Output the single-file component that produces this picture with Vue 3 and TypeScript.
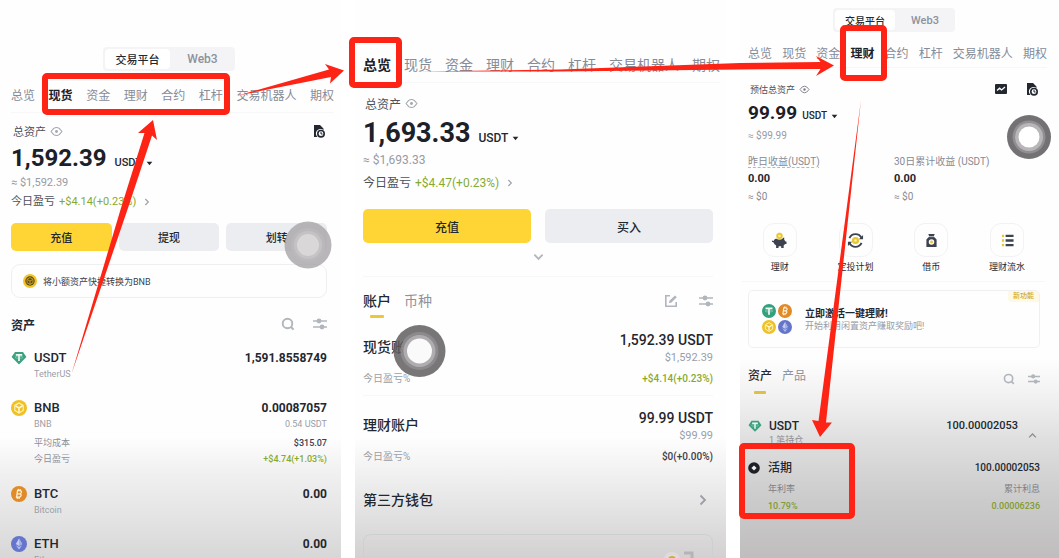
<script setup lang="ts">
interface Asset {
  icon: string
  symbol: string
  name: string
  amount: string
  value?: string
  cost?: string
  pnl?: string
}

interface Account {
  name: string
  amount: string
  value: string
  pnl: string
  gain: boolean
}

const tabs: string[] = ['总览', '现货', '资金', '理财', '合约', '杠杆', '交易机器人', '期权']

const assets: Asset[] = [
  { icon: 'tether', symbol: 'USDT', name: 'TetherUS', amount: '1,591.8558749' },
  { icon: 'bnb', symbol: 'BNB', name: 'BNB', amount: '0.00087057', value: '0.54 USDT', cost: '$315.07', pnl: '+$4.74(+1.03%)' },
  { icon: 'btc', symbol: 'BTC', name: 'Bitcoin', amount: '0.00' },
  { icon: 'eth', symbol: 'ETH', name: 'Ethereum', amount: '0.00' },
]

const accounts: Account[] = [
  { name: '现货账户', amount: '1,592.39 USDT', value: '$1,592.39', pnl: '+$4.14(+0.23%)', gain: true },
  { name: '理财账户', amount: '99.99 USDT', value: '$99.99', pnl: '$0(+0.00%)', gain: false },
]

const shortcuts = [
  { icon: 'piggy', label: '理财' },
  { icon: 'cycle', label: '定投计划' },
  { icon: 'bag', label: '借币' },
  { icon: 'list', label: '理财流水' },
]
</script>

<template>
  <svg class="symbols" aria-hidden="true">
    <symbol id="eye" viewBox="0 0 14 12">
      <path d="M1 6 L4 2.6 Q7 .6 10 2.6 L13 6 L10 9.4 Q7 11.4 4 9.4 Z" fill="none" stroke="currentColor" stroke-width="1.2" stroke-linejoin="round" />
      <circle cx="7" cy="6" r="1.6" fill="currentColor" />
    </symbol>
    <symbol id="doc" viewBox="0 0 12 14">
      <path d="M1 1 H7 L10.5 4.5 V6 A4.5 4.5 0 0 0 4.5 13 H1 Z" fill="currentColor" />
      <circle cx="8" cy="9.7" r="3.2" fill="none" stroke="currentColor" stroke-width="1.6" />
      <path d="M8 8 V10 H9.6" fill="none" stroke="currentColor" stroke-width="1" />
    </symbol>
    <symbol id="chart" viewBox="0 0 12 12">
      <rect x="0" y="1" width="12" height="10" rx="1" fill="currentColor" />
      <path d="M2 7.6 L4.6 5.2 L6.6 7 L10 4" fill="none" stroke="#fff" stroke-width="1.3" />
    </symbol>
    <symbol id="search" viewBox="0 0 14 14">
      <circle cx="6.5" cy="6.5" r="4.8" fill="none" stroke="currentColor" stroke-width="1.9" />
      <path d="M10 10 L12.6 12.6" stroke="currentColor" stroke-width="2" />
    </symbol>
    <symbol id="sliders" viewBox="0 0 14 12">
      <path d="M0 3 H14 M0 9 H14" stroke="currentColor" stroke-width="1.7" />
      <circle cx="6" cy="3" r="2.4" fill="currentColor" />
      <circle cx="9" cy="9" r="2.4" fill="currentColor" />
    </symbol>
    <symbol id="edit" viewBox="0 0 14 14">
      <path d="M6 1.8 H1.8 V12.2 H12.2 V8" fill="none" stroke="currentColor" stroke-width="1.6" />
      <path d="M5 9 L5.4 6.8 L11 1.4 L12.8 3.2 L7.2 8.7 Z" fill="currentColor" />
    </symbol>
    <symbol id="caret" viewBox="0 0 8 6">
      <path d="M.6 1 H7.4 L4 5 Z" fill="currentColor" />
    </symbol>
    <symbol id="right" viewBox="0 0 8 12">
      <path d="M1.5 1.5 L6 6 L1.5 10.5" fill="none" stroke="currentColor" stroke-width="1.8" />
    </symbol>
    <symbol id="down" viewBox="0 0 12 8">
      <path d="M1.5 1.5 L6 6 L10.5 1.5" fill="none" stroke="currentColor" stroke-width="2" />
    </symbol>
    <symbol id="up" viewBox="0 0 12 8">
      <path d="M1.5 6.5 L6 2 L10.5 6.5" fill="none" stroke="currentColor" stroke-width="1.8" />
    </symbol>
    <symbol id="tether" viewBox="0 0 16 16">
      <path d="M4 2 H12 L15.4 7 L8 14.6 L.6 7 Z" fill="#3ba17e" />
      <path d="M4.8 4.8 H11.2 M8 4.8 V11" stroke="#eefaf5" stroke-width="1.7" />
      <ellipse cx="8" cy="7.3" rx="4" ry="1" fill="none" stroke="#c9eadf" stroke-width=".4" />
    </symbol>
    <symbol id="tether-round" viewBox="0 0 16 16">
      <circle cx="8" cy="8" r="8" fill="#35a07c" />
      <path d="M4 5 H12 M8 5 V12.4" stroke="#eefaf5" stroke-width="2" />
      <ellipse cx="8" cy="8" rx="4.4" ry="1.1" fill="none" stroke="#c9eadf" stroke-width=".5" />
    </symbol>
    <symbol id="bnb" viewBox="0 0 16 16">
      <circle cx="8" cy="8" r="8" fill="#efc125" />
      <path d="M8 3 L12.2 5.4 V10.4 L8 13 L3.8 10.4 V5.4 Z" fill="none" stroke="#fff3bd" stroke-width="1.1" />
      <path d="M4.6 6 L8 8 L11.4 6 M8 8 V12" fill="none" stroke="#fff8db" stroke-width="1.5" />
    </symbol>
    <symbol id="bnb-dark" viewBox="0 0 16 16">
      <circle cx="8" cy="8" r="8" fill="#f1c42b" />
      <circle cx="8" cy="8" r="5.4" fill="#5b4a17" />
      <path d="M8 4 L11.4 6 V10 L8 12 L4.6 10 V6 Z M5 6.4 L8 8 L11 6.4 M8 8 V11.6" fill="none" stroke="#d9ad25" stroke-width="1" />
    </symbol>
    <symbol id="btc" viewBox="0 0 16 16">
      <circle cx="8" cy="8" r="8" fill="#e08b27" />
      <path d="M6.6 4.2 L5.6 11.4 M6.4 4.6 H9 Q10.8 4.8 10.4 6.4 Q10 7.8 8.2 7.8 H6.2 M8.2 7.8 Q10.6 8 10 9.8 Q9.4 11.3 7.6 11.2 H4.8 M7.4 2.8 L7.2 4.4 M9.2 3 L9 4.6 M6.4 11.2 L6.2 12.8 M8.2 11.2 L8 12.8" fill="none" stroke="#fff1da" stroke-width="1.3" />
    </symbol>
    <symbol id="eth" viewBox="0 0 16 16">
      <circle cx="8" cy="8" r="8" fill="#6475cb" />
      <path d="M8 2.4 L11.2 8.1 L8 10 L4.8 8.1 Z" fill="#c5cdf3" />
      <path d="M8 2.4 L11.2 8.1 L8 10 Z" fill="#a2afe5" />
      <path d="M4.8 9.2 L8 13.6 L11.2 9.2 L8 11.1 Z" fill="#b4bfee" />
    </symbol>
    <symbol id="flexible" viewBox="0 0 12 12">
      <circle cx="6" cy="6" r="5.8" fill="#1e2026" />
      <path d="M6 3.4 L8.6 6 L6 8.6 L3.4 6 Z" fill="#f2f1f1" />
    </symbol>
    <symbol id="piggy" viewBox="0 0 18 18">
      <path d="M2.6 9.4 Q3.6 7 7 7 H11 L14 5.8 V8.2 L15.4 10 H16.4 V12.6 H15 L13.4 14.2 V17 H10.8 V15.2 H8 V17 H5.4 V14.4 Q3 13 2.8 11.2 L1 10.4 V9 Z" fill="#3c4250" />
      <circle cx="9" cy="4.2" r="3.8" fill="#e8c62f" stroke="#fff" stroke-width=".6" />
      <circle cx="9" cy="4.2" r="1.3" fill="#fff2ab" />
    </symbol>
    <symbol id="cycle" viewBox="0 0 18 18">
      <path d="M2.6 6.4 A7 7 0 0 1 15.4 6.4 M15.4 11.6 A7 7 0 0 1 2.6 11.6" fill="none" stroke="#3c4250" stroke-width="2" />
      <path d="M12.6 7.6 H17 V3.2 Z M5.4 10.4 H1 V14.8 Z" fill="#3c4250" />
      <circle cx="9" cy="9" r="3.8" fill="#e8c62f" />
      <circle cx="9" cy="9" r="1.3" fill="#fff2ab" />
    </symbol>
    <symbol id="bag" viewBox="0 0 18 18">
      <path d="M5.6 2 H12.4 L11.4 4.8 L14.4 8 V16 H3.6 V8 L6.6 4.8 Z" fill="#3c4250" />
      <path d="M6 4.9 H12" stroke="#fff" stroke-width=".7" />
      <circle cx="9" cy="10.6" r="2.9" fill="#fff" />
      <circle cx="9" cy="10.6" r="1.5" fill="#e8c62f" />
    </symbol>
    <symbol id="list" viewBox="0 0 18 18">
      <path d="M7 4 H15.4 M7 9 H15.4 M7 14 H15.4" stroke="#3c4250" stroke-width="2.4" />
      <path d="M3 4 H5.4 M3 9 H5.4 M3 14 H5.4" stroke="#e8c62f" stroke-width="2.4" />
    </symbol>
  </svg>

  <main class="board">
    <section class="panel spot" aria-label="现货">
      <div class="segmented">
        <button type="button" class="on">交易平台</button>
        <button type="button">Web3</button>
      </div>
      <nav class="tabs">
        <button v-for="t in tabs" :key="t" type="button" :class="{ on: t === '现货' }">{{ t }}</button>
      </nav>
      <div class="label-row">
        <span>总资产</span>
        <svg class="eye"><use href="#eye" /></svg>
        <button type="button" class="icon-btn push dark" aria-label="历史记录"><svg class="doc"><use href="#doc" /></svg></button>
      </div>
      <div class="total">
        <strong>1,592.39</strong>
        <button type="button" class="unit">USDT <svg class="caret"><use href="#caret" /></svg></button>
      </div>
      <p class="approx">≈ $1,592.39</p>
      <p class="pnl">今日盈亏 <span class="gain">+$4.14(+0.23%)</span><svg class="more"><use href="#right" /></svg></p>
      <div class="actions">
        <button type="button" class="primary">充值</button>
        <button type="button">提现</button>
        <button type="button">划转</button>
      </div>
      <button type="button" class="convert">
        <svg class="coin-small"><use href="#bnb-dark" /></svg>将小额资产快捷转换为BNB
      </button>
      <div class="heading">
        <h2>资产</h2>
        <button type="button" class="icon-btn push" aria-label="搜索"><svg class="ic"><use href="#search" /></svg></button>
        <button type="button" class="icon-btn" aria-label="筛选"><svg class="ic"><use href="#sliders" /></svg></button>
      </div>
      <ul class="assets">
        <li v-for="a in assets" :key="a.symbol">
          <svg class="coin"><use :href="'#' + a.icon" /></svg>
          <div class="lines">
            <div class="line main"><span>{{ a.symbol }}</span><b>{{ a.amount }}</b></div>
            <div class="line sub"><span>{{ a.name }}</span><span>{{ a.value }}</span></div>
            <template v-if="a.cost">
              <div class="line stat first"><span>平均成本</span><b>{{ a.cost }}</b></div>
              <div class="line stat"><span>今日盈亏</span><span class="gain">{{ a.pnl }}</span></div>
            </template>
          </div>
        </li>
      </ul>
    </section>

    <section class="panel overview" aria-label="总览">
      <nav class="tabs">
        <button v-for="t in tabs" :key="t" type="button" :class="{ on: t === '总览' }">{{ t }}</button>
      </nav>
      <div class="label-row">
        <span>总资产</span>
        <svg class="eye"><use href="#eye" /></svg>
      </div>
      <div class="total">
        <strong>1,693.33</strong>
        <button type="button" class="unit">USDT <svg class="caret"><use href="#caret" /></svg></button>
      </div>
      <p class="approx">≈ $1,693.33</p>
      <p class="pnl">今日盈亏 <span class="gain">+$4.47(+0.23%)</span><svg class="more"><use href="#right" /></svg></p>
      <div class="actions">
        <button type="button" class="primary">充值</button>
        <button type="button">买入</button>
      </div>
      <button type="button" class="expand" aria-label="展开"><svg class="arrow"><use href="#down" /></svg></button>
      <div class="heading">
        <button type="button" class="view on">账户</button>
        <button type="button" class="view">币种</button>
        <button type="button" class="icon-btn push" aria-label="编辑"><svg class="ic"><use href="#edit" /></svg></button>
        <button type="button" class="icon-btn" aria-label="筛选"><svg class="ic"><use href="#sliders" /></svg></button>
      </div>
      <article v-for="a in accounts" :key="a.name" class="account">
        <div class="line top">
          <h3>{{ a.name }}</h3>
          <div class="sums"><b>{{ a.amount }}</b><span>{{ a.value }}</span></div>
        </div>
        <div class="line foot"><span>今日盈亏%</span><span :class="a.gain ? 'gain' : 'flat'">{{ a.pnl }}</span></div>
      </article>
      <button type="button" class="wallet">第三方钱包<svg class="go"><use href="#right" /></svg></button>
      <div class="wallet-card">
        <svg class="wallet-art" viewBox="0 0 46 30" aria-hidden="true">
          <circle cx="17" cy="13" r="8" fill="#dddcdd" />
          <circle cx="17" cy="13" r="4" fill="#d3ab2b" />
          <path d="M29 6 H37 V26" fill="none" stroke="#b5b3b5" stroke-width="3" />
        </svg>
      </div>
    </section>

    <section class="panel earn" aria-label="理财">
      <div class="segmented">
        <button type="button" class="on">交易平台</button>
        <button type="button">Web3</button>
      </div>
      <nav class="tabs">
        <button v-for="t in tabs" :key="t" type="button" :class="{ on: t === '理财' }">{{ t }}</button>
      </nav>
      <div class="label-row">
        <span>预估总资产</span>
        <svg class="eye"><use href="#eye" /></svg>
        <button type="button" class="icon-btn push dark" aria-label="收益分析"><svg class="doc"><use href="#chart" /></svg></button>
        <button type="button" class="icon-btn dark" aria-label="历史记录"><svg class="doc"><use href="#doc" /></svg></button>
      </div>
      <div class="total">
        <strong>99.99</strong>
        <button type="button" class="unit">USDT <svg class="caret"><use href="#caret" /></svg></button>
      </div>
      <p class="approx">≈ $99.99</p>
      <div class="profits">
        <div><span class="dashed">昨日收益(USDT)</span><b>0.00</b><span class="zero">≈ $0</span></div>
        <div><span>30日累计收益 (USDT)</span><b>0.00</b><span class="zero">≈ $0</span></div>
      </div>
      <div class="shortcuts">
        <button v-for="s in shortcuts" :key="s.label" type="button">
          <span class="tile"><svg class="art"><use :href="'#' + s.icon" /></svg></span>{{ s.label }}
        </button>
      </div>
      <div class="promo">
        <div class="quad">
          <svg><use href="#tether-round" /></svg>
          <svg><use href="#btc" /></svg>
          <svg><use href="#bnb" /></svg>
          <svg><use href="#eth" /></svg>
        </div>
        <div>
          <h3>立即激活一键理财!</h3>
          <p>开始利用闲置资产赚取奖励吧!</p>
        </div>
        <span class="badge">新功能</span>
      </div>
      <div class="heading">
        <button type="button" class="view on">资产</button>
        <button type="button" class="view">产品</button>
        <button type="button" class="icon-btn push" aria-label="搜索"><svg class="ic"><use href="#search" /></svg></button>
        <button type="button" class="icon-btn" aria-label="筛选"><svg class="ic"><use href="#sliders" /></svg></button>
      </div>
      <div class="holding">
        <svg class="gem"><use href="#tether" /></svg>
        <div class="names"><b>USDT</b><span>1 笔持仓</span></div>
        <b class="sum">100.00002053</b>
        <button type="button" class="icon-btn fold" aria-label="收起"><svg class="up"><use href="#up" /></svg></button>
      </div>
      <div class="product">
        <svg class="flex-ic"><use href="#flexible" /></svg>
        <div class="lines">
          <div class="line main"><b>活期</b><span>100.00002053</span></div>
          <div class="line keys"><span>年利率</span><span>累计利息</span></div>
          <div class="line vals"><span>10.79%</span><span>0.00006236</span></div>
        </div>
      </div>
    </section>

    <svg class="marks" viewBox="0 0 1059 558" aria-hidden="true">
      <g>
        <circle cx="308" cy="245" r="23.5" fill="#a8a6a8" fill-opacity=".82" />
        <circle cx="308" cy="245" r="17" fill="#bcbabc" fill-opacity=".7" />
        <circle cx="308" cy="245" r="14" fill="#c9c7c9" fill-opacity=".7" />
        <circle cx="308" cy="245" r="11" fill="#d9d7d8" />
      </g>
      <g>
        <circle cx="419.5" cy="351" r="26" fill="#5f5c5e" fill-opacity=".84" />
        <circle cx="419.5" cy="351" r="19" fill="#929092" fill-opacity=".8" />
        <circle cx="419.5" cy="351" r="16" fill="#b8b5b8" fill-opacity=".8" />
        <circle cx="419.5" cy="351" r="12.5" fill="#fff" fill-opacity=".94" />
      </g>
      <g>
        <circle cx="1029" cy="137" r="22" fill="#6b696b" fill-opacity=".95" />
        <circle cx="1029" cy="137" r="16.5" fill="#918f91" />
        <circle cx="1029" cy="137" r="14" fill="#b8b6b8" />
        <circle cx="1029" cy="137" r="10.5" fill="#fff" />
      </g>
      <g fill="none" stroke="#fe2415" stroke-width="6">
        <rect x="45" y="76" width="182" height="36" rx="2" />
        <rect x="352" y="40" width="47" height="45" rx="2" />
        <rect x="843" y="28" width="41" height="50" rx="2" />
        <rect x="742" y="446" width="110" height="70" rx="2" />
      </g>
      <g fill="#fe2415">
        <path d="M71.5 374 L121 208 L144.5 133 L138 133 L153 120 L157 140 L152 135.5 L128 208 Z" />
        <path d="M238 95.5 L329 69.5 L325 64 L344 70.5 L330 83.5 L331 77 Z" />
        <path d="M418 71.5 L560 69.5 L740 63 L820.5 62 L816 56 L834 65.5 L816 76 L820.5 69 L740 69.5 L560 71.5 Z" />
        <path d="M861 100 L818.5 421 L812 420 L820 437 L832 422.5 L826 422.5 Z" />
      </g>
    </svg>
  </main>
</template>

<style>
html,
body {
  background: #fff;
}
</style>

<style scoped>
.symbols {
  position: absolute;
  width: 0;
  height: 0;
}

.board {
  position: relative;
  display: grid;
  grid-template-columns: 341fr 371fr 319fr;
  column-gap: 14px;
  height: 100vh;
  overflow: hidden;
  font-family: Roboto, "Noto Sans CJK SC", sans-serif;
  color: #23272f;
}

.board * {
  box-sizing: border-box;
}

button {
  display: block;
  padding: 0;
  border: 0;
  background: none;
  font: inherit;
  color: inherit;
  white-space: nowrap;
  cursor: pointer;
}

p,
h2,
h3,
ul {
  margin: 0;
  padding: 0;
}

svg {
  display: block;
  flex: none;
}

b,
strong {
  font-weight: 500;
}

.panel {
  min-width: 0;
  height: 100vh;
  overflow: hidden;
}

.spot {
  padding: 47px 14px 0 11px;
  background: linear-gradient(#fffeff 437px, #f2f1f2 470px, #e6e6e6 510px, #d8d7d8 558px);
}

.overview {
  padding: 45px 13px 0 8px;
  background: linear-gradient(#fffeff 437px, #f1f0f1 475px, #e2e1e2 515px, #d2d0d1 558px);
}

.earn {
  padding: 8px 19px 0 8px;
  background: linear-gradient(#fffeff 358px, #f1f0f1 400px, #e0dfe0 440px, #cccbcc 500px, #bfbdbe 558px);
}

.gain {
  color: #84ab30;
}

/* platform switch */
.segmented {
  display: grid;
  grid-template-columns: 1fr 1fr;
  width: 132px;
  height: 24px;
  margin: 0 auto;
  padding: 2px 0 2px 2px;
  border-radius: 4px;
  background: #f4f4f6;
  font-size: 12px;
  font-weight: 500;
  color: #8c929e;
}

.segmented .on {
  border-radius: 4px;
  background: #fff;
  font-size: 11px;
  color: #23272f;
}

.earn .segmented {
  width: 122px;
  font-size: 11px;
}

.earn .segmented .on {
  font-size: 10px;
}

/* section tabs */
.tabs {
  display: flex;
  align-items: center;
  justify-content: space-between;
  height: 36px;
  margin: 6px -7px 0 0;
  border-bottom: 1px solid #f7f7f8;
  font-size: 12px;
  color: #858c98;
}

.tabs .on {
  font-weight: 700;
  color: #1c2028;
}

.overview .tabs {
  height: 38px;
  margin: 0 -7px 0 0;
  font-size: 14px;
}

.earn .tabs {
  height: 30px;
}

/* balance summary */
.label-row {
  display: flex;
  align-items: center;
  gap: 4px;
  height: 16px;
  margin-top: 10px;
  padding: 0 2px;
  font-size: 11px;
  color: #4c515b;
}

.overview .label-row {
  margin-top: 12px;
  font-size: 12px;
}

.earn .label-row {
  margin-top: 13px;
  font-size: 9px;
}

.eye {
  width: 13px;
  height: 11px;
  color: #a3a8b0;
}

.earn .eye {
  width: 11px;
  height: 9px;
  color: #777c86;
}

.icon-btn {
  color: #b1b5bc;
}

.icon-btn + .icon-btn {
  margin-left: 18px;
}

.earn .label-row .icon-btn + .icon-btn {
  margin-left: 15px;
}

.push {
  margin-left: auto;
}

.dark {
  color: #23272f;
}

.doc {
  width: 12px;
  height: 14px;
}

.total {
  display: flex;
  align-items: baseline;
  gap: 8px;
  height: 28px;
  margin-top: 5px;
  font-size: 24px;
  line-height: 28px;
}

.total strong {
  font-weight: 700;
  color: #1c2028;
}

.unit {
  display: flex;
  align-items: center;
  gap: 4px;
  font-size: 11px;
  font-weight: 500;
  line-height: 16px;
}

.caret {
  width: 7px;
  height: 5px;
}

.overview .total {
  height: 32px;
  margin-top: 6px;
  font-size: 27px;
  line-height: 32px;
}

.overview .unit {
  font-size: 12px;
}

.earn .total {
  gap: 5px;
  height: 24px;
  margin-top: 4px;
  font-size: 19px;
  line-height: 24px;
}

.earn .unit {
  font-size: 10px;
}

.approx {
  margin-top: 3px;
  font-size: 11px;
  line-height: 16px;
  color: #969ba4;
}

.overview .approx {
  margin-top: 3px;
  font-size: 12px;
}

.earn .approx {
  font-size: 10px;
}

.pnl {
  display: flex;
  align-items: center;
  gap: 4px;
  margin-top: 3px;
  font-size: 11px;
  line-height: 16px;
  color: #4c515b;
}

.overview .pnl {
  margin-top: 7px;
  font-size: 12px;
}

.more {
  width: 6px;
  height: 8px;
  margin-left: 4px;
  color: #9ea3ab;
}

/* action buttons */
.actions {
  display: grid;
  grid-auto-flow: column;
  grid-auto-columns: 1fr;
  gap: 7px;
  margin-top: 13px;
  font-size: 11px;
}

.actions button {
  height: 28px;
  border-radius: 5px;
  background: #ecedf1;
  font-weight: 500;
}

.actions .primary {
  background: #ffd535;
}

.overview .actions {
  gap: 14px;
  margin-top: 18px;
  font-size: 12px;
}

.overview .actions button {
  height: 34px;
}

.convert {
  display: flex;
  align-items: center;
  gap: 6px;
  width: 100%;
  height: 34px;
  margin-top: 13px;
  padding-left: 11px;
  border: 1px solid #efeff1;
  border-radius: 9px;
  font-size: 9px;
  color: #3b404a;
}

.coin-small {
  width: 14px;
  height: 14px;
}

.expand {
  display: flex;
  justify-content: center;
  align-items: center;
  width: 100%;
  height: 34px;
  padding-bottom: 6px;
  border-bottom: 1px solid #f7f7f8;
  color: #b1b5bc;
}

.arrow {
  width: 11px;
  height: 8px;
}

/* headings above lists */
.heading {
  display: flex;
  align-items: center;
  height: 20px;
  margin-top: 16px;
}

.heading h2 {
  font-size: 12px;
  font-weight: 700;
}

.ic {
  width: 14px;
  height: 14px;
}

.earn .ic {
  width: 12px;
  height: 12px;
}

.overview .heading {
  gap: 13px;
  margin: 14px 0 7px;
  font-size: 14px;
}

.overview .icon-btn + .icon-btn {
  margin-left: 8px;
}

.earn .heading {
  gap: 10px;
  margin-top: 18px;
  font-size: 12px;
}

.earn .heading .icon-btn {
  padding-top: 6px;
}

.earn .heading .icon-btn + .icon-btn {
  margin-left: 3px;
}

.view {
  position: relative;
  line-height: 20px;
  color: #8c929e;
}

.view.on {
  font-weight: 500;
  color: #23272f;
}

.view.on::after {
  content: "";
  position: absolute;
  left: 25%;
  right: 25%;
  bottom: -7px;
  height: 3px;
  border-radius: 1px;
  background: #efc735;
}

.earn .view.on::after {
  bottom: -8px;
  background: #dfbf45;
}

/* coin list */
.assets {
  margin-top: 15px;
  list-style: none;
}

.assets li {
  display: flex;
  gap: 7px;
  margin-bottom: 18px;
}

.coin {
  width: 16px;
  height: 16px;
  margin-top: 1px;
}

.lines {
  flex: 1;
}

.line {
  display: flex;
  justify-content: space-between;
}

.assets .main {
  font-size: 12px;
  line-height: 18px;
}

.assets .main span {
  font-size: 13px;
  font-weight: 500;
}

.assets .main b {
  font-weight: 700;
}

.assets .sub {
  font-size: 9px;
  line-height: 14px;
  color: #9a9ea7;
}

.stat {
  font-size: 9px;
  line-height: 16px;
  color: #8c919b;
}

.stat.first {
  margin-top: 4px;
}

.stat b {
  color: #3b404a;
}

.stat .gain {
  font-weight: 500;
}

/* account list */
.account {
  padding: 13px 0 7px;
}

.account + .account {
  border-top: 1px solid #f7f7f8;
}

.account h3,
.wallet {
  font-size: 14px;
  font-weight: 500;
  line-height: 32px;
}

.sums {
  text-align: right;
  font-size: 14px;
  line-height: 18px;
}

.sums b,
.sums span {
  display: block;
}

.sums span {
  font-size: 11px;
  color: #9a9ea7;
}

.foot {
  margin-top: 3px;
  font-size: 10px;
  line-height: 18px;
  color: #9a9ea7;
}

.foot .gain,
.foot .flat {
  font-weight: 500;
}

.foot .gain {
  color: #84ab30;
}

.foot .flat {
  color: #3b404a;
}

.wallet {
  display: flex;
  justify-content: space-between;
  align-items: center;
  width: 100%;
  height: 54px;
  padding-right: 6px;
}

.go {
  width: 8px;
  height: 12px;
  color: #9b9ea5;
}

.wallet-card {
  display: flex;
  justify-content: flex-end;
  height: 60px;
  margin-top: 7px;
  padding: 12px 11px 0 0;
  border: 1px solid #cdd0d1;
  border-radius: 8px;
}

.wallet-art {
  width: 46px;
  height: 30px;
}

/* earn panel */
.profits {
  display: grid;
  grid-template-columns: 1fr 1fr;
  margin-top: 10px;
  font-size: 10px;
  line-height: 16px;
  color: #868b95;
}

.profits div {
  display: flex;
  flex-direction: column;
  align-items: flex-start;
}

.dashed {
  text-decoration: underline dashed #b4b7bd;
  text-underline-offset: 2px;
}

.profits b {
  margin-top: 1px;
  font-size: 11px;
  font-weight: 700;
  color: #23272f;
}

.zero {
  margin-top: 2px;
}

.shortcuts {
  display: grid;
  grid-template-columns: repeat(4, 1fr);
  margin: 18px -5px 0 -6px;
  padding-bottom: 7px;
  border-bottom: 1px solid #f7f7f8;
  font-size: 9px;
  line-height: 14px;
}

.shortcuts button {
  display: flex;
  flex-direction: column;
  align-items: center;
  gap: 3px;
}

.tile {
  display: flex;
  align-items: center;
  justify-content: center;
  width: 34px;
  height: 34px;
  border: 1px solid #f2f2f4;
  border-radius: 11px;
}

.art {
  width: 17px;
  height: 17px;
}

.promo {
  position: relative;
  display: flex;
  align-items: center;
  gap: 13px;
  height: 58px;
  margin-top: 8px;
  padding-left: 13px;
  border: 1px solid #f0f0f2;
  border-radius: 5px;
}

.quad {
  display: grid;
  grid-template-columns: 14px 14px;
  gap: 2px;
}

.quad svg {
  width: 14px;
  height: 14px;
}

.promo h3 {
  font-size: 10px;
  font-weight: 700;
  line-height: 13px;
}

.promo p {
  font-size: 9px;
  line-height: 12px;
  color: #969ba4;
}

.badge {
  position: absolute;
  top: 0;
  right: 0;
  padding: 0 5px;
  border-radius: 0 4px 0 4px;
  background: #fdf9e4;
  font-size: 7px;
  font-weight: 500;
  line-height: 11px;
  color: #d1a92a;
}

.holding {
  display: flex;
  margin-top: 31px;
}

.gem {
  width: 14px;
  height: 14px;
  margin: 2px 7px 0 0;
}

.names {
  font-size: 12px;
  line-height: 18px;
}

.names b,
.names span {
  display: block;
}

.names span {
  font-size: 9px;
  line-height: 10px;
  color: #8c8e94;
}

.sum {
  margin-left: auto;
  font-size: 11px;
  line-height: 18px;
}

.fold {
  align-self: flex-end;
  margin: 0 3px 6px 10px;
  color: #8c8e94;
}

.up {
  width: 9px;
  height: 7px;
}

.product {
  display: flex;
  gap: 8px;
  margin-top: 14px;
}

.flex-ic {
  width: 12px;
  height: 12px;
  margin-top: 3px;
}

.product .main {
  font-size: 10px;
  font-weight: 500;
  line-height: 18px;
}

.product .main b {
  font-size: 12px;
}

.keys {
  margin-top: 4px;
  font-size: 9px;
  line-height: 16px;
  color: #7d7f85;
}

.vals {
  margin-top: 1px;
  font-size: 9px;
  font-weight: 500;
  line-height: 16px;
  color: #819b2e;
}

.marks {
  position: absolute;
  top: 0;
  left: 0;
  width: 100%;
  pointer-events: none;
}
</style>
